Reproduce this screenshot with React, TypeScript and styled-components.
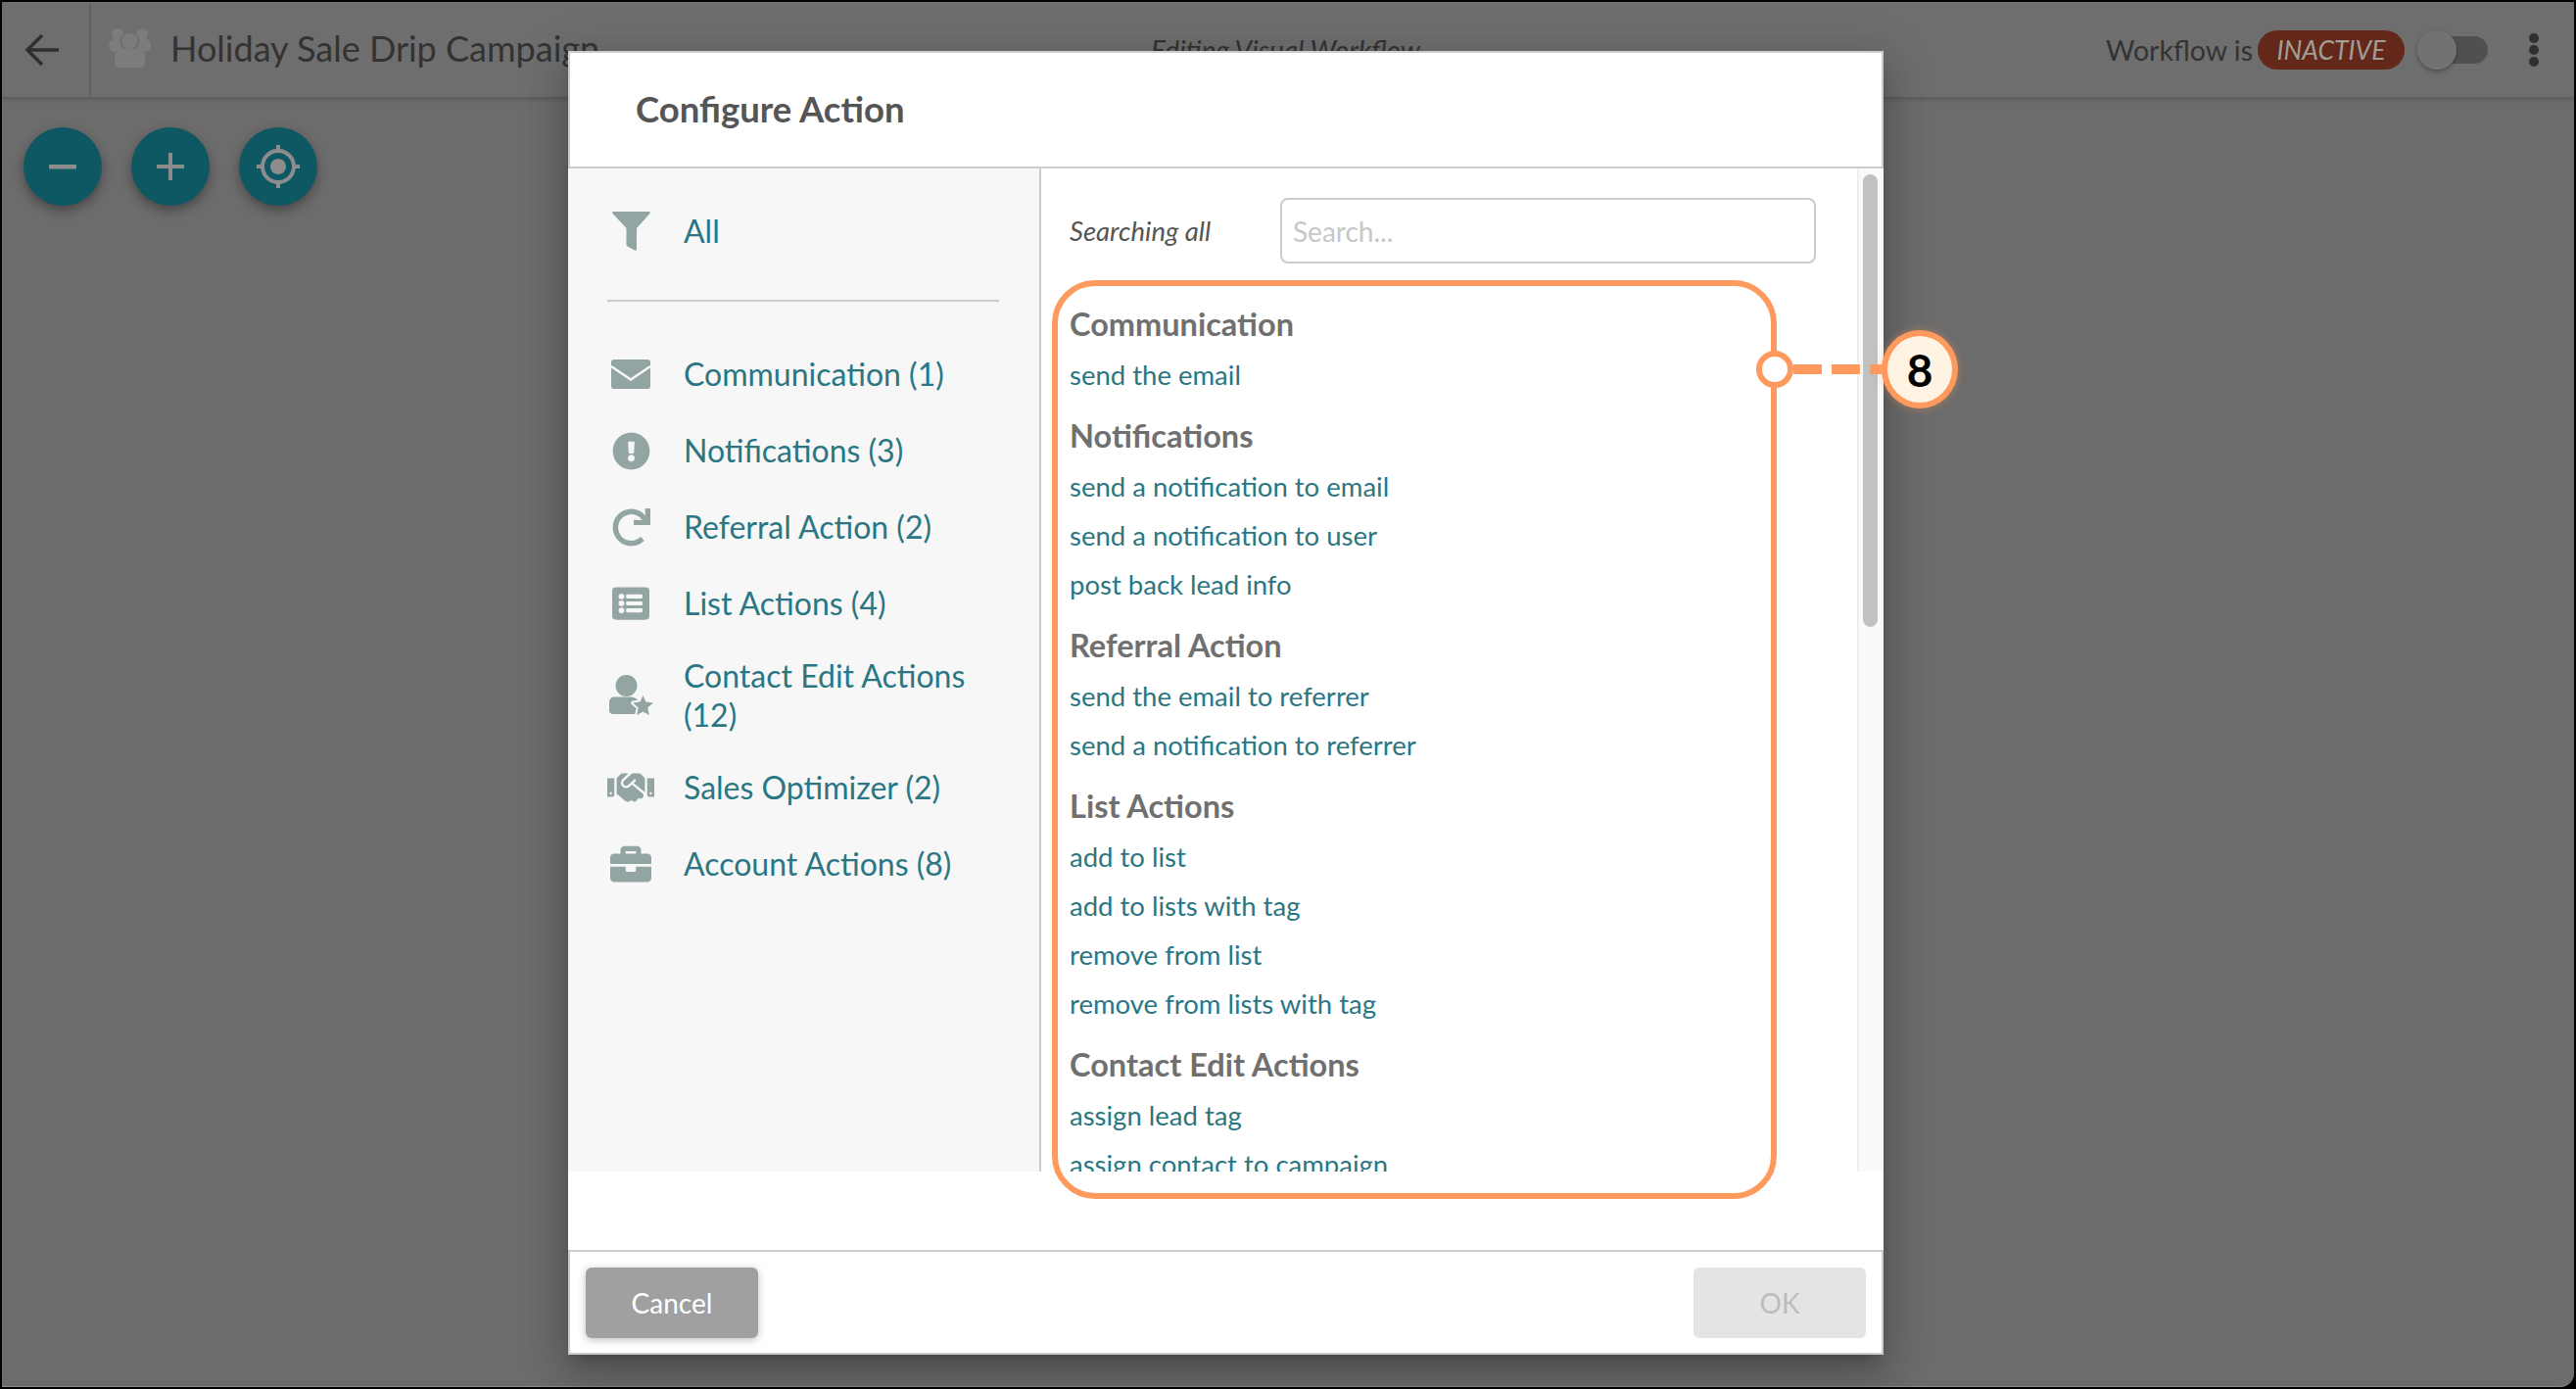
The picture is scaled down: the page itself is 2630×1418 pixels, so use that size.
import React from 'react';
import styled, { createGlobalStyle } from 'styled-components';
import { FaBriefcase, FaExclamationCircle, FaHandshake, FaListAlt, FaRedo } from 'react-icons/fa';
import { MdGpsFixed } from 'react-icons/md';

const GlobalStyle = createGlobalStyle`
  html, body {
    margin: 0;
    background: #000;
  }
  * {
    box-sizing: border-box;
  }
`;

const Page = styled.div`
  position: relative;
  width: 2630px;
  height: 1418px;
  overflow: hidden;
  background: #000;
  border: solid #000;
  border-width: 2px;
  font-family: Lato, "Open Sans", sans-serif;
`;

const Backdrop = styled.div`
  height: 100%;
  background: #6c6c6c;
  border-bottom: 1px solid #8a8a8a;
  border-bottom-right-radius: 14px;
`;

const TopBar = styled.header`
  display: grid;
  grid-template-columns: 1fr auto 1fr;
  align-items: center;
  height: 97px;
  background: #6e6e6e;
  box-shadow: 0 2px 5px rgba(0, 0, 0, 0.2);
`;

const BarLeft = styled.div`
  display: flex;
  align-items: center;
  height: 100%;
`;

const BackCell = styled.div`
  display: flex;
  align-items: center;
  height: 94px;
  width: 91px;
  padding-left: 23px;
  border-right: 2px solid #606060;
  color: #2f2f2f;
`;

const CampaignTitle = styled.div`
  display: flex;
  align-items: center;
  gap: 20px;
  margin: -3px 0 0 18px;
  font-size: 36px;
  color: #333;
  white-space: nowrap;
`;

const EditingLabel = styled.div`
  font-size: 28px;
  font-style: italic;
  color: #333;
  margin-right: 5px;
`;

const BarRight = styled.div`
  display: flex;
  align-items: center;
  justify-content: flex-end;
  padding-right: 36px;
`;

const WorkflowLabel = styled.span`
  font-size: 28.5px;
  color: #333;
  margin-right: 5px;
`;

const StatusPill = styled.span`
  display: flex;
  align-items: center;
  justify-content: center;
  width: 150px;
  height: 40px;
  border-radius: 20px;
  background: #64281a;
  color: #a09e94;
  font-size: 26.5px;
  font-style: italic;
`;

const Switch = styled.div`
  position: relative;
  display: flex;
  align-items: center;
  width: 72px;
  height: 40px;
  margin: 0 42px 0 13px;
`;

const SwitchTrack = styled.div`
  width: 52px;
  height: 28px;
  margin-left: 20px;
  border-radius: 14px;
  background: #505050;
`;

const SwitchThumb = styled.div`
  position: absolute;
  left: 0;
  top: 0;
  width: 40px;
  height: 40px;
  border-radius: 50%;
  background: #727272;
  box-shadow: 0 2px 4px rgba(0, 0, 0, 0.3);
`;

const ZoomTools = styled.div`
  display: flex;
  gap: 30px;
  padding: 31px 0 0 22px;
`;

const RoundButton = styled.div`
  display: flex;
  align-items: center;
  justify-content: center;
  width: 80px;
  height: 80px;
  border-radius: 50%;
  background: #0e5864;
  color: #8c8c8c;
  box-shadow: 0 5px 12px rgba(0, 0, 0, 0.35);
`;

const Modal = styled.section`
  position: absolute;
  left: 578px;
  top: 50px;
  width: 1343px;
  height: 1331px;
  display: flex;
  flex-direction: column;
  background: #fff;
  box-shadow: 0 24px 38px 3px rgba(0, 0, 0, 0.14), 0 9px 46px 8px rgba(0, 0, 0, 0.12),
    0 11px 15px -7px rgba(0, 0, 0, 0.2);
`;

const ModalHeader = styled.div`
  display: flex;
  align-items: center;
  flex: none;
  height: 120px;
  padding: 0 0 3px 67px;
  border: 2px solid #ccc;
  font-size: 36.5px;
  font-weight: 700;
  color: #555;
`;

const ModalBody = styled.div`
  display: flex;
  flex: none;
  height: 1024px;
  overflow: hidden;
`;

const Sidebar = styled.nav`
  flex: none;
  width: 483px;
  padding: 25px 0 0 40px;
  background: #f7f7f7;
  border-right: 2px solid #ccc;
`;

const CategoryRow = styled.a`
  display: flex;
  align-items: center;
  gap: 30px;
  min-height: 78px;
  width: 400px;
  padding: 15px 0;
  font-size: 32px;
  line-height: 40px;
  color: #2b7683;
`;

const CategoryIcon = styled.span`
  display: flex;
  align-items: center;
  justify-content: center;
  flex: none;
  width: 48px;
  color: #93a5a3;
`;

const SidebarRule = styled.hr`
  width: 400px;
  height: 2px;
  margin: 31px 0 35px;
  border: 0;
  background: #ccc;
`;

const ActionsPane = styled.div`
  flex: 1;
  min-width: 0;
  padding: 30px 0 0 29px;
`;

const SearchRow = styled.div`
  display: flex;
  align-items: center;
`;

const SearchLabel = styled.span`
  width: 215px;
  font-size: 27.5px;
  font-style: italic;
  color: #555;
`;

const SearchInput = styled.input`
  width: 547px;
  height: 67px;
  padding: 0 11px;
  border: 2px solid #ccc;
  border-radius: 8px;
  font: 28px Lato, sans-serif;
  outline: none;
  &::placeholder {
    color: #c4c8c7;
    opacity: 1;
  }
`;

const ActionGroups = styled.div`
  margin-top: 42px;
`;

const GroupTitle = styled.h3`
  height: 40px;
  margin: 17px 0 7px;
  font-size: 32.5px;
  font-weight: 700;
  line-height: 40px;
  color: #707070;
`;

const ActionLink = styled.a`
  display: block;
  height: 50px;
  font-size: 27.5px;
  line-height: 50px;
  color: #2b7683;
`;

const ScrollTrack = styled.div`
  flex: none;
  width: 27px;
  padding: 6px 0 0 4px;
  background: #fafafa;
  border-left: 2px solid #eee;
`;

const ScrollThumb = styled.div`
  width: 15px;
  height: 462px;
  border-radius: 8px;
  background: #c1c1c1;
`;

const ModalGap = styled.div`
  flex: 1;
`;

const ModalFooter = styled.div`
  display: flex;
  justify-content: space-between;
  flex: none;
  height: 107px;
  padding: 16px 16px 15px;
  border: 2px solid #ccc;
`;

const FooterButton = styled.button<{ $disabled?: boolean }>`
  width: 176px;
  height: 72px;
  border: 0;
  border-radius: 6px;
  font: 28px Lato, sans-serif;
  background: ${(p) => (p.$disabled ? '#e4e4e4' : '#a0a0a0')};
  color: ${(p) => (p.$disabled ? '#bcbcbc' : '#fff')};
  box-shadow: ${(p) => (p.$disabled ? 'none' : '0 2px 8px rgba(0, 0, 0, 0.25)')};
`;

const CalloutFrame = styled.div`
  position: absolute;
  left: 1072px;
  top: 284px;
  width: 740px;
  height: 938px;
  border: 6px solid #ff9a5e;
  border-radius: 44px;
`;

const CalloutDot = styled.div`
  position: absolute;
  left: 1791px;
  top: 356px;
  width: 38px;
  height: 38px;
  border: 6px solid #ff9a5e;
  border-radius: 50%;
  background: #fff;
`;

const CalloutLine = styled.svg`
  position: absolute;
  left: 1829px;
  top: 370px;
`;

const CalloutBadge = styled.div`
  position: absolute;
  left: 1919px;
  top: 335px;
  display: flex;
  align-items: center;
  justify-content: center;
  width: 78px;
  height: 80px;
  border: 6px solid #ff9a5e;
  border-radius: 50%;
  background: #fff3e3;
  box-shadow: 0 0 8px rgba(255, 154, 94, 0.45);
  color: #000;
  font-family: Lato, sans-serif;
  font-size: 46px;
  font-weight: 700;
`;

const FilterIcon = () => (
  <svg width="39" height="40" viewBox="0 0 39 40" fill="currentColor">
    <path d="M1.500 0H37.500Q39.500 0 38.500 2L25 17V38Q25 40.500 23 39.500L15.500 35.500Q14.500 35 14.500 33V17L.5 2Q-.5 0 1.500 0Z" />
  </svg>
);

const EnvelopeIcon = () => (
  <svg width="40" height="30" viewBox="0 0 40 30">
    <rect width="40" height="30" rx="3" fill="currentColor" />
    <path d="M0 7L20 20.500L40 7" fill="none" stroke="#f7f7f7" strokeWidth="2.500" />
  </svg>
);

const starPath = 'M34.500 21L37.500 27.600L44.800 28.600L39.300 33.600L40.800 41L34.500 37.400L28.200 41L29.700 33.600L24.200 28.600L31.500 27.600Z';

const UserStarIcon = () => (
  <svg width="45" height="42" viewBox="0 0 45 42" fill="currentColor">
    <circle cx="17.500" cy="11" r="11" />
    <path d="M5 22.500H22C26 22.500 30 25 30 28V36C30 38.500 28 40 26 40H4C1.500 40 0 38.500 0 36V28C0 25 2 22.500 5 22.500Z" />
    <path d={starPath} fill="#f7f7f7" stroke="#f7f7f7" strokeWidth="4" strokeLinejoin="round" />
    <path d={starPath} />
  </svg>
);

const UsersIcon = () => (
  <svg width="43" height="40" viewBox="0 0 43 40" fill="#7c7c7c">
    <circle cx="9" cy="6" r="6" />
    <circle cx="34" cy="6" r="6" />
    <rect x="0" y="11" width="17" height="13" rx="6" />
    <rect x="26" y="11" width="17" height="13" rx="6" />
    <circle cx="21.500" cy="13" r="9" stroke="#6e6e6e" strokeWidth="2" />
    <path d="M13 21H30C34 21 37 24 37 29V36C37 38.500 35.500 40 33 40H10C7.500 40 6 38.500 6 36V29C6 24 9 21 13 21Z" />
  </svg>
);

const categories = [
  { label: 'Communication (1)', icon: <EnvelopeIcon /> },
  { label: 'Notifications (3)', icon: <FaExclamationCircle size={39} /> },
  { label: 'Referral Action (2)', icon: <FaRedo size={39} /> },
  { label: 'List Actions (4)', icon: <FaListAlt size={38} /> },
  { label: 'Contact Edit Actions (12)', icon: <UserStarIcon /> },
  { label: 'Sales Optimizer (2)', icon: <FaHandshake size={48} /> },
  { label: 'Account Actions (8)', icon: <FaBriefcase size={42} /> },
];

const actionGroups = [
  { title: 'Communication', actions: ['send the email'] },
  {
    title: 'Notifications',
    actions: ['send a notification to email', 'send a notification to user', 'post back lead info'],
  },
  { title: 'Referral Action', actions: ['send the email to referrer', 'send a notification to referrer'] },
  {
    title: 'List Actions',
    actions: ['add to list', 'add to lists with tag', 'remove from list', 'remove from lists with tag'],
  },
  { title: 'Contact Edit Actions', actions: ['assign lead tag', 'assign contact to campaign'] },
];

const App: React.FC = () => {
  return (
    <Page>
      <GlobalStyle />
      <Backdrop>
        <TopBar>
          <BarLeft>
            <BackCell>
              <svg width="36" height="34" viewBox="0 0 36 34" fill="none" stroke="currentColor" strokeWidth="3.500">
                <path d="M35 17H3M18 2L3 17L18 32" />
              </svg>
            </BackCell>
            <CampaignTitle>
              <UsersIcon />
              Holiday Sale Drip Campaign
            </CampaignTitle>
          </BarLeft>
          <EditingLabel>Editing Visual Workflow</EditingLabel>
          <BarRight>
            <WorkflowLabel>Workflow is</WorkflowLabel>
            <StatusPill>INACTIVE</StatusPill>
            <Switch>
              <SwitchTrack />
              <SwitchThumb />
            </Switch>
            <svg width="10" height="34" viewBox="0 0 10 34" fill="#2f2f2f">
              <circle cx="5" cy="5" r="5" />
              <circle cx="5" cy="17" r="5" />
              <circle cx="5" cy="29" r="5" />
            </svg>
          </BarRight>
        </TopBar>
        <ZoomTools>
          <RoundButton>
            <svg width="28" height="28" viewBox="0 0 28 28" fill="currentColor">
              <rect y="12" width="28" height="4.500" />
            </svg>
          </RoundButton>
          <RoundButton>
            <svg width="28" height="28" viewBox="0 0 28 28" fill="currentColor">
              <rect y="12" width="28" height="4" />
              <rect x="12" width="4" height="28" />
            </svg>
          </RoundButton>
          <RoundButton>
            <MdGpsFixed size={48} />
          </RoundButton>
        </ZoomTools>
      </Backdrop>

      <Modal>
        <ModalHeader>Configure Action</ModalHeader>
        <ModalBody>
          <Sidebar>
            <CategoryRow>
              <CategoryIcon>
                <FilterIcon />
              </CategoryIcon>
              All
            </CategoryRow>
            <SidebarRule />
            {categories.map((c) => (
              <CategoryRow key={c.label}>
                <CategoryIcon>{c.icon}</CategoryIcon>
                <span>{c.label}</span>
              </CategoryRow>
            ))}
          </Sidebar>
          <ActionsPane>
            <SearchRow>
              <SearchLabel>Searching all</SearchLabel>
              <SearchInput placeholder="Search..." readOnly />
            </SearchRow>
            <ActionGroups>
              {actionGroups.map((g) => (
                <div key={g.title}>
                  <GroupTitle>{g.title}</GroupTitle>
                  {g.actions.map((a) => (
                    <ActionLink key={a}>{a}</ActionLink>
                  ))}
                </div>
              ))}
            </ActionGroups>
          </ActionsPane>
          <ScrollTrack>
            <ScrollThumb />
          </ScrollTrack>
        </ModalBody>
        <ModalGap />
        <ModalFooter>
          <FooterButton>Cancel</FooterButton>
          <FooterButton $disabled>OK</FooterButton>
        </ModalFooter>
      </Modal>

      <CalloutFrame />
      <CalloutLine width="92" height="10">
        <line x1="0" y1="5" x2="92" y2="5" stroke="#ff9a5e" strokeWidth="10" strokeDasharray="29 10" />
      </CalloutLine>
      <CalloutDot />
      <CalloutBadge>8</CalloutBadge>
    </Page>
  );
};

export default App;
